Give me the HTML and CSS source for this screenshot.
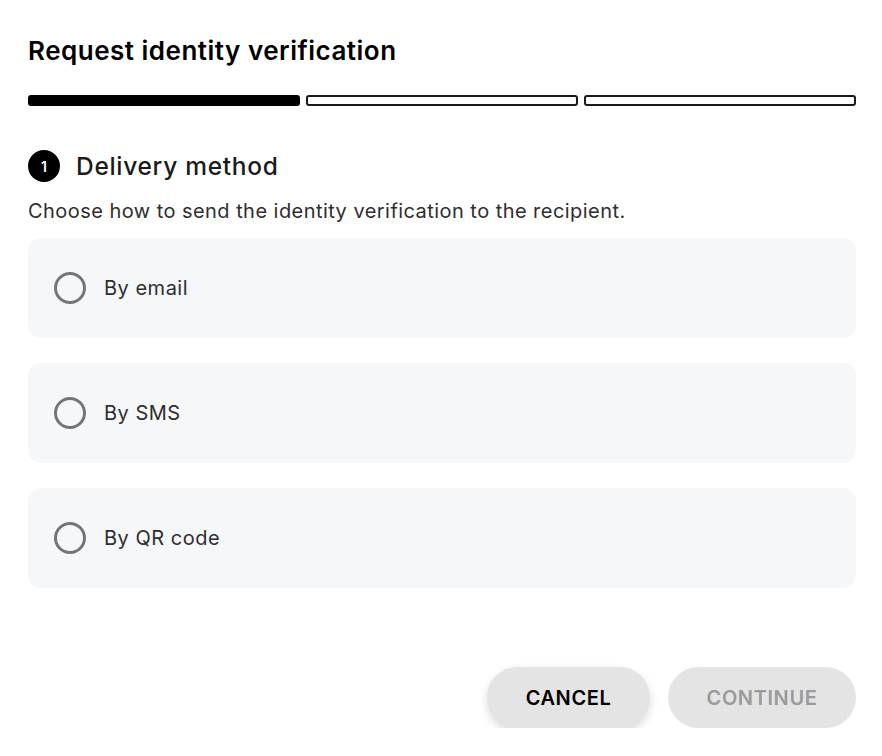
FILE: index.html
```html
<!DOCTYPE html>
<html lang="en">
<head>
<meta charset="utf-8">
<title>Request identity verification</title>
<link rel="stylesheet" href="styles.css">
</head>
<body>
<div class="dialog">
  <h1 class="title">Request identity verification</h1>
  <div class="progress">
    <div class="seg seg-done"></div>
    <div class="seg"></div>
    <div class="seg"></div>
  </div>
  <div class="step-head">
    <span class="step-num">1</span>
    <h2 class="step-title">Delivery method</h2>
  </div>
  <p class="desc">Choose how to send the identity verification to the recipient.</p>
  <div class="options">
    <label class="option"><span class="radio"></span><span class="opt-label">By email</span></label>
    <label class="option"><span class="radio"></span><span class="opt-label">By SMS</span></label>
    <label class="option"><span class="radio"></span><span class="opt-label">By QR code</span></label>
  </div>
  <div class="actions">
    <button class="btn btn-cancel">CANCEL</button>
    <button class="btn btn-continue" disabled>CONTINUE</button>
  </div>
</div>
</body>
</html>
```
FILE: styles.css
```css
* { box-sizing: border-box; }
html, body { margin: 0; padding: 0; background: #fff; }
body {
  font-family: Inter, "Noto Sans", "Liberation Sans", sans-serif;
  color: #1a1a1a;
}
.dialog {
  width: 828px;
  margin-left: 28px;
  padding-top: 35px;
}
.title {
  margin: 0;
  font-size: 26px;
  line-height: 32px;
  font-weight: 600;
  color: #000;
  letter-spacing: 0.5px;
}
.progress {
  display: flex;
  gap: 6px;
  margin-top: 28px;
}
.seg {
  flex: 1;
  height: 11px;
  border: 2px solid #1a1a1a;
  border-radius: 3px;
  background: #fff;
}
.seg-done { background: #000; border-color: #000; }
.step-head {
  display: flex;
  align-items: center;
  gap: 16px;
  margin-top: 44px;
}
.step-num {
  width: 32px;
  height: 32px;
  border-radius: 50%;
  background: #000;
  color: #fff;
  font-size: 14px;
  font-weight: 600;
  display: flex;
  align-items: center;
  justify-content: center;
}
.step-title {
  margin: 0;
  font-size: 24.5px;
  line-height: 32px;
  font-weight: 500;
  color: #1a1a1a;
  letter-spacing: 0.7px;
}
.desc {
  margin: 16px 0 0;
  font-size: 20px;
  line-height: 26px;
  color: #2e2e2e;
  letter-spacing: 0.45px;
}
.options {
  display: flex;
  flex-direction: column;
  gap: 25px;
  margin-top: 14px;
}
.option {
  display: flex;
  align-items: center;
  height: 100px;
  padding-left: 26px;
  background: #f6f7f9;
  border-radius: 13px;
}
.radio {
  width: 32px;
  height: 32px;
  border: 3px solid #757575;
  border-radius: 50%;
  flex: none;
}
.opt-label {
  margin-left: 18px;
  font-size: 20px;
  color: #2e2e2e;
  letter-spacing: 0.5px;
}
.actions {
  display: flex;
  justify-content: flex-end;
  gap: 18px;
  margin-top: 79px;
}
.btn {
  height: 61px;
  border: none;
  border-radius: 31px;
  background: #e4e4e4;
  font-family: inherit;
  font-size: 20px;
  font-weight: 600;
  letter-spacing: 0.6px;
}
.btn-cancel {
  width: 163px;
  color: #000;
  box-shadow: 0 4px 10px rgba(0,0,0,0.15);
}
.btn-continue {
  width: 188px;
  color: #9a9a9a;
}
```
